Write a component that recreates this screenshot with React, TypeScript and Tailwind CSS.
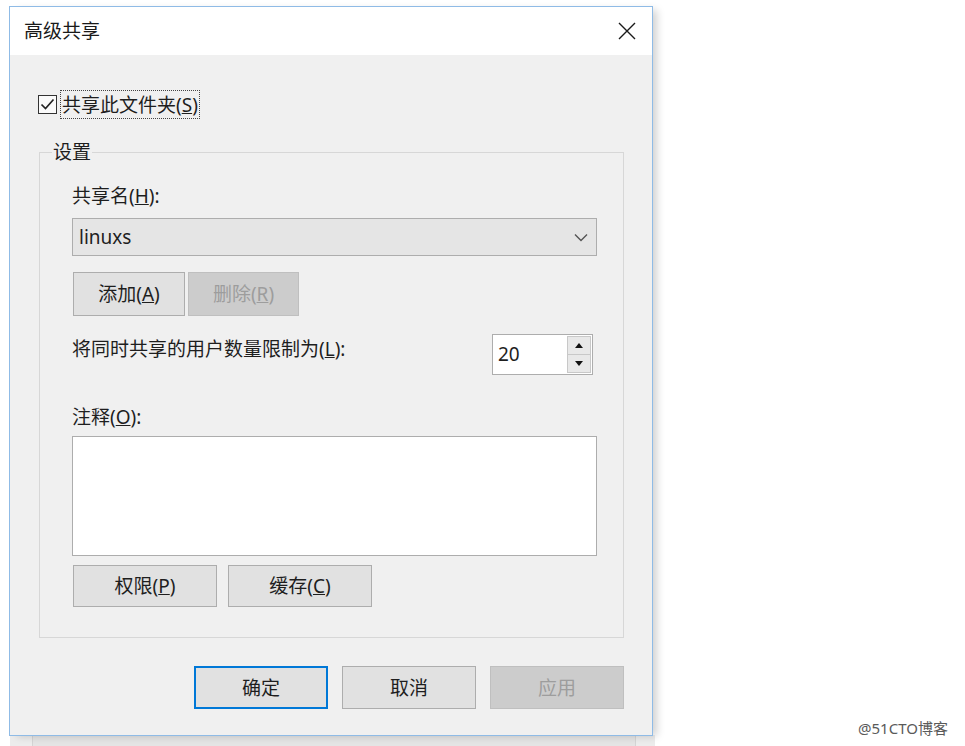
import React from "react";

const font = { fontFamily: '"Noto Sans", "Noto Sans CJK SC", sans-serif' };

function Btn({ children, w, disabled, primary }: { children: React.ReactNode; w: string; disabled?: boolean; primary?: boolean }) {
  const base = "flex items-center justify-center text-[19px] leading-[26px]";
  const cls = disabled
    ? "bg-[#cccccc] border border-[#bfbfbf] text-[#9d9d9d]"
    : primary
    ? "bg-[#e1e1e1] border-2 border-[#0078d7] text-[#1e1e1e]"
    : "bg-[#e1e1e1] border border-[#adadad] text-[#1e1e1e]";
  return <div className={`${base} ${cls} ${w}`}>{children}</div>;
}

export default function App() {
  return (
    <div className="relative w-[965px] h-[746px] bg-white overflow-hidden" style={font}>
      {/* underlying window edge */}
      <div className="absolute left-[10px] top-[735px] w-[645px] h-[11px] bg-[#ececec] flex">
        <div className="w-[23px] h-full border-r border-[#d4d4d4]" />
        <div className="flex-1 h-full bg-[#e4e4e4] border-t border-[#d8d8d8]" />
        <div className="w-[20px] h-full border-l border-[#d4d4d4]" />
      </div>

      {/* dialog */}
      <div className="absolute left-[9px] top-[6px] w-[644px] h-[730px] border border-[#8fbbe6] bg-[#f0f0f0] flex flex-col shadow-[6px_2px_8px_-2px_rgba(0,0,0,0.18)]">
        {/* title bar */}
        <div className="h-[48px] bg-white flex items-center justify-between pl-[14px] pr-[16px] shrink-0">
          <span className="text-[19px] leading-[26px] text-[#1a1a1a]">高级共享</span>
          <svg width="18" height="18" viewBox="0 0 18 18">
            <path d="M1 1 L17 17 M17 1 L1 17" stroke="#1a1a1a" strokeWidth="1.4" fill="none" />
          </svg>
        </div>

        {/* body */}
        <div className="flex flex-col pl-[29px] pr-[28px] text-[#1e1e1e]">
          {/* checkbox row */}
          <div className="mt-[35px] h-[29px] flex items-center">
            <div className="w-[19px] h-[19px] border-[1.5px] border-[#333] bg-[#fafafa] flex items-center justify-center ml-[-1px]">
              <svg width="15" height="15" viewBox="0 0 15 15">
                <path d="M1.5 7.5 L5.5 11.5 L13.5 2.5" stroke="#222" strokeWidth="1.7" fill="none" />
              </svg>
            </div>
            <div className="ml-[3px] h-[29px] px-[1px] border border-dotted border-[#444] flex items-center text-[19px] leading-[26px]">
              共享此文件夹(<span className="underline">S</span>)
            </div>
          </div>

          {/* group box */}
          <div className="relative mt-[33px] border border-[#d7d7d7] pl-[32px] pr-[26px] pt-[30px] pb-[30px] flex flex-col">
            <span className="absolute left-[12px] top-[-14px] px-[1px] bg-[#f0f0f0] text-[19px] leading-[26px]">设置</span>

            <div className="text-[19px] leading-[26px]">
              共享名(<span className="underline">H</span>):
            </div>

            <div className="mt-[9px] h-[38px] bg-[#e5e5e5] border border-[#adadad] flex items-center justify-between pl-[6px] pr-[8px]">
              <span className="text-[19px] leading-[26px]">linuxs</span>
              <svg width="14" height="9" viewBox="0 0 14 9">
                <path d="M1 1.5 L7 7.5 L13 1.5" stroke="#555" strokeWidth="1.4" fill="none" />
              </svg>
            </div>

            <div className="mt-[16px] ml-[1px] flex gap-[3px] h-[44px]">
              <Btn w="w-[112px]">添加(<span className="underline">A</span>)</Btn>
              <Btn w="w-[111px]" disabled>删除(<span className="underline">R</span>)</Btn>
            </div>

            <div className="mt-[18px] flex justify-between items-start">
              <span className="mt-[2px] text-[19px] leading-[26px]">
                将同时共享的用户数量限制为(<span className="underline">L</span>):
              </span>
              <div className="mr-[4px] w-[101px] h-[41px] bg-white border border-[#adadad] flex">
                <span className="flex-1 pl-[5px] text-[19px] leading-[39px]">20</span>
                <div className="w-[24px] my-[1px] mr-[1px] flex flex-col border border-[#c8c8c8] bg-[#e8e8e8]">
                  <div className="flex-1 flex items-center justify-center border-b border-[#c8c8c8]">
                    <svg width="8" height="5" viewBox="0 0 8 5"><path d="M0 5 L4 0 L8 5 Z" fill="#111" /></svg>
                  </div>
                  <div className="flex-1 flex items-center justify-center">
                    <svg width="8" height="5" viewBox="0 0 8 5"><path d="M0 0 L8 0 L4 5 Z" fill="#111" /></svg>
                  </div>
                </div>
              </div>
            </div>

            <div className="mt-[29px] text-[19px] leading-[26px]">
              注释(<span className="underline">O</span>):
            </div>

            <div className="mt-[6px] h-[120px] bg-white border border-[#adadad]" />

            <div className="mt-[9px] ml-[1px] flex gap-[11px] h-[42px]">
              <Btn w="w-[144px]">权限(<span className="underline">P</span>)</Btn>
              <Btn w="w-[144px]">缓存(<span className="underline">C</span>)</Btn>
            </div>
          </div>

          {/* bottom buttons */}
          <div className="mt-[28px] flex justify-end gap-[14px] h-[43px]">
            <Btn w="w-[134px]" primary>确定</Btn>
            <Btn w="w-[134px]">取消</Btn>
            <Btn w="w-[134px]" disabled>应用</Btn>
          </div>
        </div>
      </div>

      {/* watermark */}
      <span className="absolute left-[858px] top-[718px] text-[15px] leading-[20px] text-[#5a5a5a]">@51CTO博客</span>
    </div>
  );
}
